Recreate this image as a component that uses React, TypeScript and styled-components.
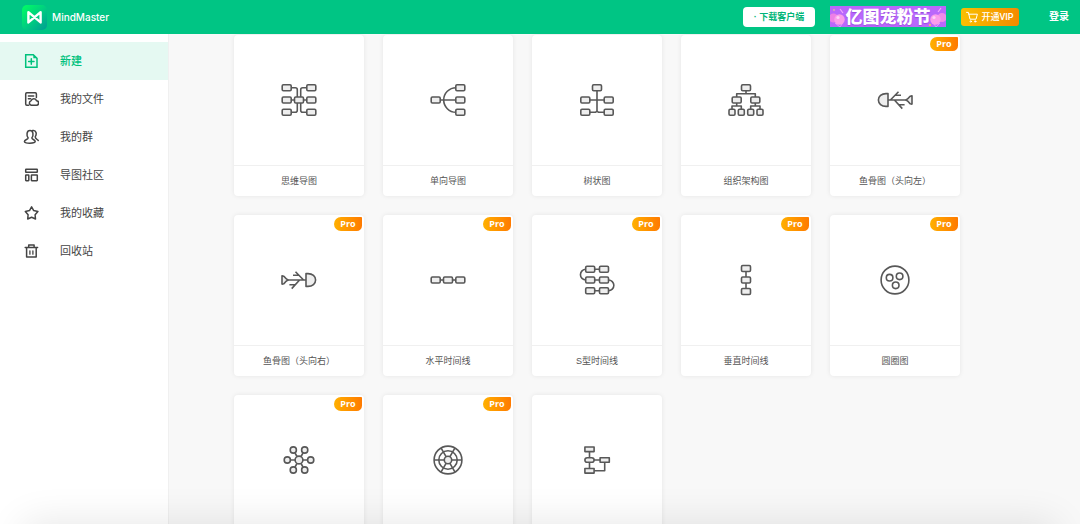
import React from "react";
import styled, { createGlobalStyle } from "styled-components";

const GlobalStyle = createGlobalStyle`
  * { box-sizing: border-box; }
  body {
    margin: 0;
    background: #f8f8f8;
    color: #555;
    font-family: "Liberation Sans", "Noto Sans CJK SC", sans-serif;
  }
  button { font-family: inherit; border: 0; padding: 0; cursor: pointer; }
  a { color: inherit; text-decoration: none; }
`;

const Page = styled.div`
  display: flex;
  flex-direction: column;
  height: 100vh;
  overflow: hidden;
`;

const Header = styled.header`
  display: flex;
  flex: none;
  align-items: center;
  justify-content: space-between;
  height: 34px;
  padding: 0 11px 0 22px;
  background: #00c584;
  color: #fff;
`;

const Brand = styled.a`
  display: flex;
  align-items: center;
  gap: 5px;
  font: 500 10px/16px Inter, sans-serif;
`;

const Actions = styled.div`
  display: flex;
  align-items: center;
  gap: 15px;
`;

const DownloadButton = styled.button`
  width: 72px;
  height: 20px;
  border-radius: 4px;
  background: #fff;
  color: #00b578;
  font-size: 9px;
  font-weight: 700;
  line-height: 20px;
`;

const Banner = styled.a`
  position: relative;
  width: 116px;
  height: 21px;
  margin-bottom: 2px;
  background: #b968fb;
  text-align: center;
`;

const BannerArt = styled.svg`
  position: absolute;
  inset: 0;
`;

const BannerText = styled.span`
  position: relative;
  display: block;
  font: 900 17px/20px "Noto Sans CJK SC", sans-serif;
  text-shadow: 0 1px 1px #9a4be0;
`;

const VipButton = styled.button`
  display: flex;
  align-items: center;
  justify-content: center;
  gap: 3px;
  width: 58px;
  height: 18px;
  border-radius: 3px;
  background: linear-gradient(90deg, #f9c000, #f58a00);
  color: #fff;
  font: 500 9px/18px Roboto, "Noto Sans CJK SC", sans-serif;
`;

const LoginLink = styled.a`
  margin-left: 15px;
  font-size: 10px;
  font-weight: 700;
  line-height: 16px;
`;

const Body = styled.div`
  display: flex;
  flex: 1;
  min-height: 0;
`;

const Sidebar = styled.nav`
  flex: none;
  width: 169px;
  padding-top: 8px;
  border-right: 1px solid #f0f0f0;
  background: #fff;
`;

const NavItem = styled.a<{ $active?: boolean }>`
  display: flex;
  align-items: center;
  gap: 21px;
  height: 38px;
  padding-left: 23px;
  background: ${(p) => (p.$active ? "#e5f9f2" : "transparent")};
  color: ${(p) => (p.$active ? "#00c17c" : "#444")};
  font-size: 11px;
  font-weight: ${(p) => (p.$active ? 500 : 400)};
  line-height: 16px;
`;

const Main = styled.main`
  flex: 1;
  min-width: 0;
  padding: 1px 0 24px 65px;
  overflow-y: auto;
  scrollbar-width: none;
`;

const Grid = styled.div`
  display: grid;
  grid-template-columns: repeat(auto-fill, 130px);
  gap: 19px;
`;

const Card = styled.a`
  position: relative;
  display: block;
  border-radius: 4px;
  background: #fff;
  box-shadow: 0 0 5px rgba(0, 0, 0, 0.08);
`;

const Preview = styled.div`
  display: flex;
  align-items: center;
  justify-content: center;
  height: 130px;
`;

const CardTitle = styled.div`
  border-top: 1px solid #f0f0f0;
  font-size: 9px;
  line-height: 30px;
  text-align: center;
`;

const ProBadge = styled.span`
  position: absolute;
  top: 2px;
  right: 2px;
  width: 28px;
  border-radius: 8px 1px 6px 8px;
  background: linear-gradient(90deg, #ffb000, #ff7a00);
  color: #fff;
  font: 700 9px/14px "Open Sans", sans-serif;
  text-align: center;
`;

const BottomShade = styled.div`
  position: fixed;
  right: 24px;
  bottom: -40px;
  left: 24px;
  height: 40px;
  box-shadow: 0 0 40px rgba(0, 0, 0, 0.11);
  pointer-events: none;
`;

const Logo = () => (
  <svg width="25" height="25" viewBox="0 0 25 25" aria-hidden="true">
    <defs>
      <linearGradient id="logo" x1="0" y1="0" x2="1" y2="1">
        <stop offset="0" stopColor="#00ff62" />
        <stop offset="0.5" stopColor="#00cf80" />
        <stop offset="1" stopColor="#009c94" />
      </linearGradient>
    </defs>
    <rect width="25" height="25" rx="5" fill="url(#logo)" />
    <path d="M6.4 17.4V7.2L18.6 17.4V7.2Z" fill="none" stroke="#fff" strokeWidth="2.4" strokeLinejoin="round" />
  </svg>
);

const Cart = () => (
  <svg width="12" height="12" viewBox="0 0 12 12" fill="none" stroke="#fff" strokeWidth="1" strokeLinecap="round" strokeLinejoin="round" aria-hidden="true">
    <path d="M.6 1.4H2.4L4 8.2H10L11.4 3.2H3" />
    <circle cx="4.8" cy="10.4" r=".7" />
    <circle cx="9.2" cy="10.4" r=".7" />
  </svg>
);

const Balloons = () => (
  <BannerArt width="116" height="21" viewBox="0 0 116 21" aria-hidden="true">
    <path d="M5 17L10 21M12 18L10 21M110 17L106 21M104 18L106 21" stroke="#e9b6ff" strokeWidth=".7" />
    <circle cx="3.5" cy="12" r="4.6" fill="#ee7fe6" />
    <circle cx="9.5" cy="13.5" r="5.2" fill="#fb9ceb" />
    <circle cx="8" cy="11.5" r="1.6" fill="#ffd0f6" />
    <circle cx="112" cy="11.5" r="4.6" fill="#f08be8" />
    <circle cx="105.5" cy="13.5" r="5.2" fill="#fb9ceb" />
    <circle cx="104" cy="11.5" r="1.6" fill="#ffd0f6" />
    <path d="M10 3L13 7M108 6L111 2" stroke="#f5a8ff" strokeWidth="1.2" />
    <circle cx="4" cy="4" r=".8" fill="#ffe07a" />
    <circle cx="100" cy="19" r="1" fill="#ffd24a" />
  </BannerArt>
);

const NavIcon = ({ children }: { children: React.ReactNode }) => (
  <svg width="16" height="16" viewBox="0 0 16 16" fill="none" stroke="currentColor" strokeWidth="1.5" strokeLinejoin="round" strokeLinecap="round" aria-hidden="true">
    {children}
  </svg>
);

const navItems = [
  {
    label: "新建",
    icon: (
      <>
        <path d="M2.7 1.8H10.3L14 5.3V14.3H2.7Z" strokeLinejoin="miter" />
        <path d="M10.3 1.8V5.3H14Z" fill="currentColor" stroke="none" />
        <path d="M8.3 5.8V11.2M5.6 8.5H11" />
      </>
    ),
  },
  {
    label: "我的文件",
    icon: (
      <>
        <path d="M5.6 14.2H3.8C3 14.2 2.7 13.8 2.7 13.1V2.9C2.7 2.1 3 1.8 3.8 1.8H12.3C13.1 1.8 13.4 2.1 13.4 2.9V6.5" />
        <path d="M5.4 4.9H10.7M5.4 7.8H7.6" />
        <path d="M8.3 14.2A2.2 2.2 0 0 1 8 9.9A2.9 2.9 0 0 1 13.5 9.8A2.2 2.2 0 0 1 13.3 14.2Z" />
      </>
    ),
  },
  {
    label: "我的群",
    icon: (
      <>
        <path d="M5.1 8.8C3.4 6.6 3.4 1.6 7 1.6S10.6 6.6 8.9 8.8C8.4 10.6 12.2 10.4 12.2 12.6C12.2 14.6 1.4 14.9 1.4 12.6C1.4 10.4 5.6 10.6 5.1 8.8Z" />
        <path d="M9.6 1.5C13.6 .8 13.8 5.4 12.3 7.6C12 9.4 13.6 9.8 15.2 11.4" />
      </>
    ),
  },
  {
    label: "导图社区",
    icon: (
      <>
        <rect x="2.7" y="2.3" width="11.6" height="3" rx=".4" />
        <rect x="2.7" y="8" width="3.1" height="5.7" rx=".4" />
        <rect x="8.4" y="8" width="5.9" height="5.7" rx=".4" />
      </>
    ),
  },
  {
    label: "我的收藏",
    icon: <path d="M8.6 1.9L10.7 5.6L14.9 6.5L12.1 9.7L12.5 14L8.6 12.3L4.7 14L5.1 9.7L2.3 6.5L6.5 5.6Z" />,
  },
  {
    label: "回收站",
    icon: (
      <>
        <path d="M2.2 4.6H14.6M5.7 4.4V1.9H11.1V4.4M3.6 4.8V14.1H13.2V4.8" />
        <path d="M6.9 7.8V11.2M9.9 7.8V11.2" strokeWidth="1.3" />
      </>
    ),
  },
];

type NodeProps = { x: number; y: number; w?: number; h?: number; r?: number };

const Node = ({ x, y, w = 9, h = 6, r = 1.2 }: NodeProps) => (
  <rect x={x - w / 2} y={y - h / 2} width={w} height={h} rx={r} fill="#eee" />
);

const Nodes = ({ at, w }: { at: number[][]; w?: number }) => (
  <>
    {at.map(([x, y]) => (
      <Node key={`${x}-${y}`} x={x} y={y} w={w} />
    ))}
  </>
);

const Fishbone = () => (
  <>
    <path d="M13 13.6V26.4H11C6.5 26.4 3.4 23.6 3.4 20S6.5 13.6 11 13.6Z" fill="#eee" />
    <path d="M13 20H31M15.4 20L23.5 11.8M20.4 15.2H26M19.4 20L27.3 28.6M24 24.8H29.6" />
    <path d="M31 20C33 19 34.4 17.2 35.2 16.2L37 15.9V24.1L35.2 23.8C34.4 22.8 33 21 31 20Z" fill="#eee" />
  </>
);

const diagrams = [
  {
    title: "思维导图",
    art: (
      <>
        <path d="M12.5 7.7H16.3Q18.3 7.7 18.3 9.7V30.3Q18.3 32.3 16.3 32.3H12.5M27.5 7.7H23.7Q21.7 7.7 21.7 9.7V30.3Q21.7 32.3 23.7 32.3H27.5M12 20H28" />
        <Nodes at={[[7.7, 7.7], [7.7, 20], [7.7, 32.3], [20, 20], [32.3, 7.7], [32.3, 20], [32.3, 32.3]]} />
      </>
    ),
  },
  {
    title: "单向导图",
    art: (
      <>
        <path d="M12 20H28M28 7.7A12.3 12.3 0 0 0 28 32.3" />
        <Nodes at={[[7.7, 20], [32.3, 7.7], [32.3, 20], [32.3, 32.3]]} />
      </>
    ),
  },
  {
    title: "树状图",
    art: (
      <>
        <path d="M20 11V32.3M13 20H27M13 32.3H18.5L20 31L21.5 32.3H27" />
        <Nodes at={[[20, 7.7], [8.3, 20], [31.7, 20], [8.3, 32.3], [31.7, 32.3]]} />
      </>
    ),
  },
  {
    title: "组织架构图",
    art: (
      <>
        <path d="M20 11V13.8M10.7 17V13.8H29.3V17M10.7 23V26M6 29V26H15.3V29M29.3 23V26M24.7 29V26H34V29" />
        <Nodes at={[[20, 7.7], [10.7, 20], [29.3, 20]]} />
        <Nodes w={6} at={[[6, 32.3], [15.3, 32.3], [24.7, 32.3], [34, 32.3]]} />
      </>
    ),
  },
  { title: "鱼骨图（头向左）", pro: true, art: <Fishbone /> },
  {
    title: "鱼骨图（头向右）",
    pro: true,
    art: (
      <g transform="matrix(-1 0 0 1 40 0)">
        <Fishbone />
      </g>
    ),
  },
  {
    title: "水平时间线",
    pro: true,
    art: (
      <>
        <path d="M12 20H28" />
        <Nodes at={[[7.7, 20], [20, 20], [32.3, 20]]} />
      </>
    ),
  },
  {
    title: "S型时间线",
    pro: true,
    art: (
      <>
        <path d="M8.8 9.3A5.35 5.35 0 0 0 8.8 20M31.5 20A5.35 5.35 0 0 1 31.5 30.7M17 9.3H23M17 20H23M17 30.7H23" />
        <Nodes at={[[13.2, 9.3], [27, 9.3], [13.2, 20], [27, 20], [13.2, 30.7], [27, 30.7]]} />
      </>
    ),
  },
  {
    title: "垂直时间线",
    pro: true,
    art: (
      <>
        <path d="M20 11V29" />
        <Nodes at={[[20, 8.5], [20, 20], [20, 31.5]]} />
      </>
    ),
  },
  {
    title: "圆圈图",
    pro: true,
    art: (
      <>
        <circle cx="20" cy="20" r="13.9" />
        <circle cx="14.6" cy="17.7" r="3.3" />
        <circle cx="24.6" cy="16.3" r="3.3" />
        <circle cx="20.7" cy="25.3" r="3.3" />
      </>
    ),
  },
  {
    title: "气泡图",
    pro: true,
    art: (
      <>
        <path d="M12 20H28M16 13L24 27M24 13L16 27" />
        <g fill="#eee">
          <circle cx="20" cy="20" r="3.9" />
          <circle cx="8.3" cy="20" r="3.1" />
          <circle cx="31.7" cy="20" r="3.1" />
          <circle cx="14.3" cy="10" r="3.1" />
          <circle cx="25.7" cy="10" r="3.1" />
          <circle cx="14.3" cy="30" r="3.1" />
          <circle cx="25.7" cy="30" r="3.1" />
        </g>
      </>
    ),
  },
  {
    title: "扇形放射图",
    pro: true,
    art: (
      <>
        <circle cx="20" cy="20" r="13.9" />
        <circle cx="20" cy="20" r="9.2" />
        <path d="M6 20H34M13 7.9L27 32.1M27 7.9L13 32.1" />
        <circle cx="20" cy="20" r="3.7" fill="#eee" />
      </>
    ),
  },
  {
    title: "流程图",
    art: (
      <>
        <path d="M12.5 12V29M17 20H23M27.7 22V30.8H17" />
        <Node x={12.5} y={9.3} w={9.2} h={4.6} r={0} />
        <Node x={12.5} y={20} w={9.2} h={4.6} r={2.3} />
        <Node x={27.7} y={20} w={9.2} h={4.6} r={0} />
        <Node x={12.5} y={30.8} w={9.2} h={4.6} r={0} />
      </>
    ),
  },
];

export default function App() {
  return (
    <Page>
      <GlobalStyle />
      <Header>
        <Brand href="#">
          <Logo />
          MindMaster
        </Brand>
        <Actions>
          <DownloadButton type="button">· 下载客户端</DownloadButton>
          <Banner href="#">
            <Balloons />
            <BannerText>亿图宠粉节</BannerText>
          </Banner>
          <VipButton type="button">
            <Cart />
            开通VIP
          </VipButton>
          <LoginLink href="#">登录</LoginLink>
        </Actions>
      </Header>
      <Body>
        <Sidebar>
          {navItems.map((item, i) => (
            <NavItem key={item.label} href="#" $active={i === 0}>
              <NavIcon>{item.icon}</NavIcon>
              {item.label}
            </NavItem>
          ))}
        </Sidebar>
        <Main>
          <Grid>
            {diagrams.map((d) => (
              <Card key={d.title} href="#">
                <Preview>
                  <svg width="40" height="40" viewBox="0 0 40 40" fill="none" stroke="#585858" strokeWidth="1.6" strokeLinejoin="round" aria-hidden="true">
                    {d.art}
                  </svg>
                </Preview>
                <CardTitle>{d.title}</CardTitle>
                {d.pro && <ProBadge>Pro</ProBadge>}
              </Card>
            ))}
          </Grid>
        </Main>
      </Body>
      <BottomShade />
    </Page>
  );
}
